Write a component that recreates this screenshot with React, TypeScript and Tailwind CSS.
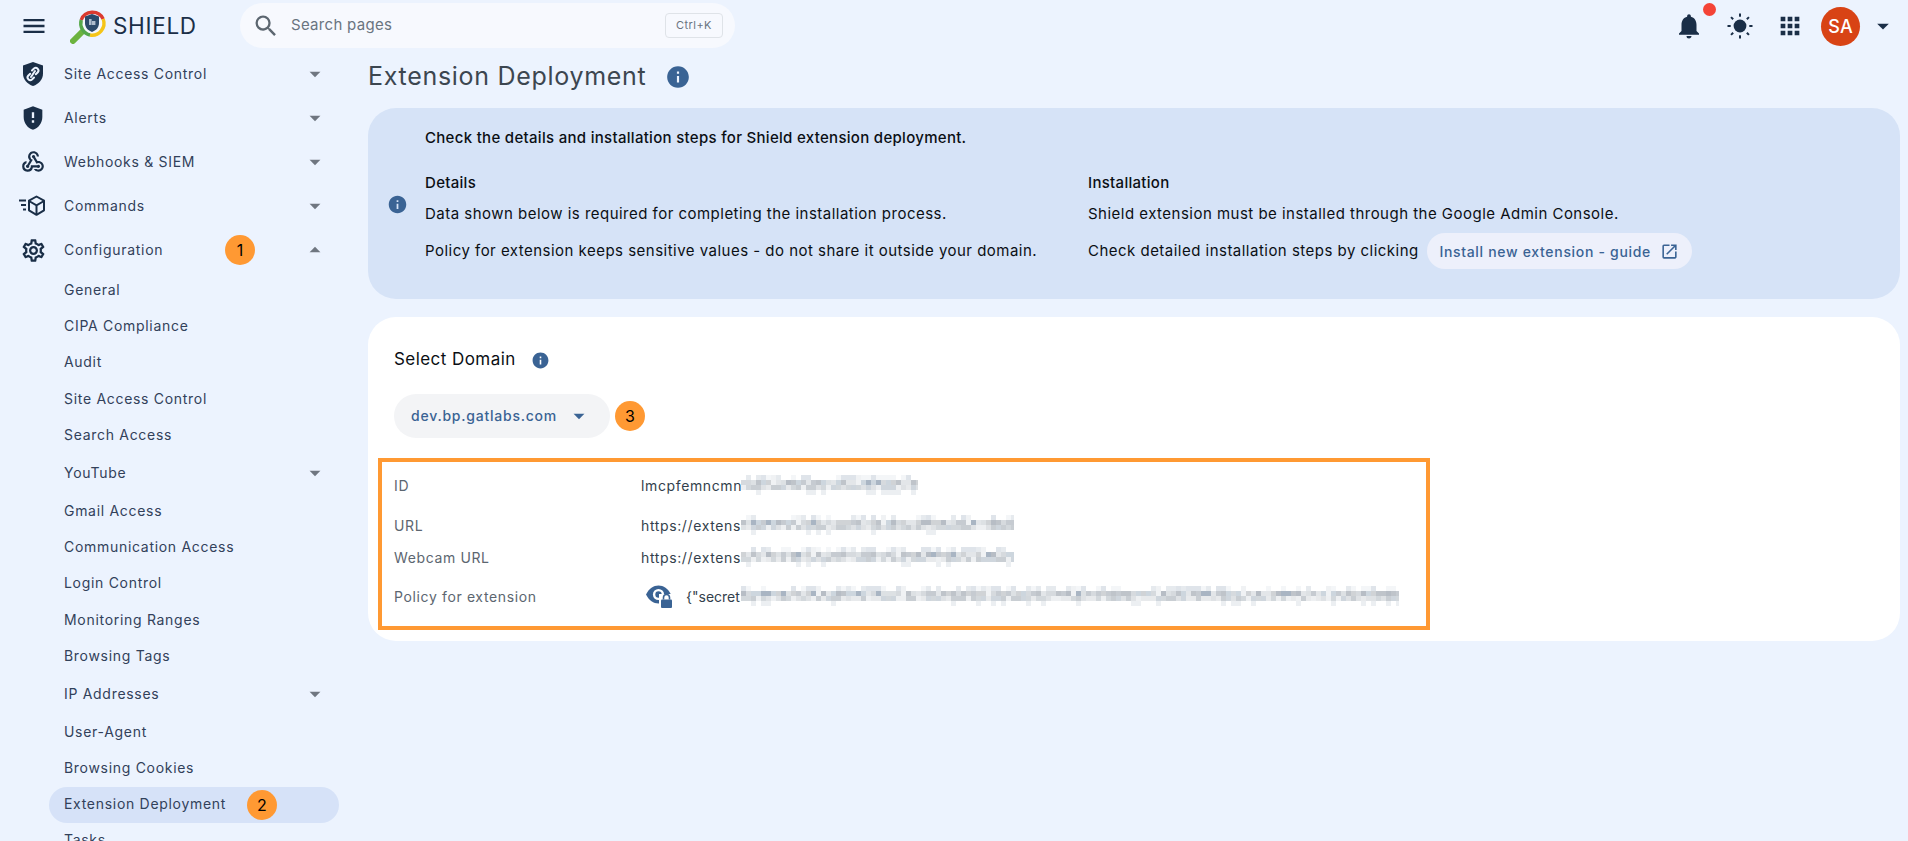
import React from "react";
import { MdMenu, MdSearch, MdNotifications, MdApps, MdOpenInNew, MdInfo, MdGppMaybe, MdWebhook, MdOutlineSettings, MdArrowDropDown, MdArrowDropUp } from "react-icons/md";

function Logo() {
  return (
    <svg width="38" height="36" viewBox="0 0 38 36" className="shrink-0">
      <path d="M3 33 L12 24" stroke="#6cb33f" strokeWidth="6" strokeLinecap="round" fill="none" />
      <circle cx="22" cy="15" r="12.5" fill="#f4f7fc" />
      <path d="M11.2 12 A12 12 0 0 1 33.2 11" stroke="#db3a2f" strokeWidth="3.4" fill="none" />
      <path d="M33.2 11 A12 12 0 0 1 20 27" stroke="#f5c518" strokeWidth="3.4" fill="none" />
      <path d="M20 27 A12 12 0 0 1 11.2 12" stroke="#55a84a" strokeWidth="3.4" fill="none" />
      <path d="M22 6 L29 8.5 V15 C29 19.5 26 22.5 22 24 C18 22.5 15 19.5 15 15 V8.5 Z" fill="#2c4a6b" />
      <rect x="19" y="11" width="2.6" height="6" fill="#aebccd" />
      <rect x="22" y="13" width="3.4" height="4" fill="#aebccd" />
    </svg>
  );
}

function ShieldLink() {
  return (
    <svg width="24" height="26" viewBox="0 0 24 26">
      <path d="M12 1 L22 4.6 V12.5 C22 18.5 17.8 23 12 25 C6.2 23 2 18.5 2 12.5 V4.6 Z" fill="#1a2e47" />
      <g stroke="#ecf3fe" strokeWidth="2" fill="none" strokeLinecap="round">
        <path d="M11 9.5 L13 7.5 A2.7 2.7 0 0 1 16.8 11.3 L14.8 13.3" />
        <path d="M13 16.5 L11 18.5 A2.7 2.7 0 0 1 7.2 14.7 L9.2 12.7" />
        <path d="M10 16 L14 10" />
      </g>
    </svg>
  );
}

function CommandsIcon() {
  return (
    <svg width="28" height="24" viewBox="0 0 28 24" fill="none" stroke="#1a2e47" strokeWidth="2">
      <path d="M17.5 2.5 L25 6.7 V16.3 L17.5 20.8 L10 16.3 V6.7 Z" strokeLinejoin="round" />
      <path d="M10 7 L17.5 11.3 L25 7 M17.5 11.3 V20.5" />
      <path d="M0 6.5 H7 M2 11 H7 M4 15.5 H7" />
    </svg>
  );
}

function SunIcon() {
  return (
    <svg width="26" height="26" viewBox="0 0 26 26" fill="#1a2e47">
      <circle cx="13" cy="13" r="6.4" />
      <rect x="12" y="0.5" width="2" height="3.2" />
      <rect x="12" y="22.3" width="2" height="3.2" />
      <rect x="0.5" y="12" width="3.2" height="2" />
      <rect x="22.3" y="12" width="3.2" height="2" />
      <rect x="3.6" y="4.2" width="3" height="2" transform="rotate(45 5.1 5.2)" />
      <rect x="19.4" y="4.2" width="3" height="2" transform="rotate(-45 20.9 5.2)" />
      <rect x="3.6" y="19.8" width="3" height="2" transform="rotate(-45 5.1 20.8)" />
      <rect x="19.4" y="19.8" width="3" height="2" transform="rotate(45 20.9 20.8)" />
    </svg>
  );
}

function EyeLock() {
  return (
    <svg width="28" height="24" viewBox="0 0 28 24">
      <path d="M1 10.5 C4 4.5 8.5 1.5 13.5 1.5 C18.5 1.5 23 4.5 26 10.5 C23 16.5 18.5 19.5 13.5 19.5 C8.5 19.5 4 16.5 1 10.5 Z" fill="#3a6394" />
      <circle cx="13.5" cy="10.5" r="5.6" fill="#fff" />
      <circle cx="13.5" cy="10.5" r="3.2" fill="#3a6394" />
      <rect x="14" y="10" width="14" height="14" fill="#fff" />
      <rect x="16" y="15.5" width="11" height="8.5" rx="1" fill="#3a6394" />
      <path d="M18.5 15.5 V13.5 A3 3 0 0 1 24.5 13.5 V15.5" stroke="#3a6394" strokeWidth="1.6" fill="none" />
    </svg>
  );
}

function Mosaic({ width, seed }: { width: number; seed: number }) {
  const rects: React.ReactElement[] = [];
  const light = ["#ffffff", "#ffffff", "#f4f6f8", "#e6eaee", "#dfe4ea", "#ffffff"];
  const mid = ["#c6cbd1", "#d6dade", "#b7bdc5", "#e3e6e9", "#a9b5c3", "#cdd6de", "#bfc4ca", "#d0d3d6", "#dde1e4"];
  const low = ["#dfe2e5", "#d3d8dc", "#e8eaec", "#cfd6dd", "#eef0f2", "#c9ced3"];
  const rare = ["#ffffff", "#ffffff", "#ffffff", "#ffffff", "#eceff2", "#ffffff"];
  const rows = [light, mid, low, rare];
  let s = seed * 7919 + 17;
  for (let y = 0; y < 4; y++) {
    for (let x = 0; x * 5 < width; x++) {
      s = (s * 1103515245 + 12345) & 0x7fffffff;
      const p = rows[y];
      const wordGap = (x + seed) % 17 === 0 && y < 2;
      const fill = wordGap ? "#f0f2f4" : p[(s >> 16) % p.length];
      rects.push(<rect key={`${x}-${y}`} x={x * 5} y={y * 5} width="5" height="5" fill={fill} />);
    }
  }
  return (
    <svg width={width} height="20" className="shrink-0" shapeRendering="crispEdges">
      {rects}
    </svg>
  );
}

function Badge({ n }: { n: number }) {
  return (
    <span className="flex h-[30px] w-[30px] shrink-0 items-center justify-center rounded-full bg-[#ff9933] text-[16px] tracking-normal text-black">{n}</span>
  );
}

function Caret({ up = false }: { up?: boolean }) {
  const Icon = up ? MdArrowDropUp : MdArrowDropDown;
  return <Icon size={26} className="text-[#6f7680]" />;
}

function TopItem({ icon, label, up, badge }: { icon: React.ReactNode; label: string; up?: boolean; badge?: number }) {
  return (
    <div className="flex h-[44px] items-center">
      <div className="flex w-[64px] justify-center pl-[2px]">
        <div className="flex h-[28px] w-[30px] items-center justify-center">{icon}</div>
      </div>
      <span className="w-[161px] pb-[2px]">{label}</span>
      <span className="w-[77px]">{badge ? <Badge n={badge} /> : null}</span>
      <Caret up={up} />
    </div>
  );
}

function SubItem({ label, caret }: { label: string; caret?: boolean }) {
  return (
    <div className={`flex items-center pl-[64px] ${caret ? "h-[39px]" : "h-[36.4px]"}`}>
      <span className="w-[238px] pb-[2px]">{label}</span>
      {caret ? <Caret /> : null}
    </div>
  );
}

function DataRow({ label, value, blur, seed, className }: { label: string; value: React.ReactNode; blur: number; seed: number; className: string }) {
  return (
    <div className={`flex h-[20px] items-center text-[14px] tracking-[0.045em] ${className}`}>
      <span className="w-[247px] text-[#5c6670]">{label}</span>
      <div className="flex w-[100px] items-center overflow-hidden whitespace-nowrap text-[#333f4c]">{value}</div>
      <Mosaic width={blur} seed={seed} />
    </div>
  );
}

export default function App() {
  return (
    <div className="h-[841px] w-[1908px] overflow-hidden bg-[#ecf3fe] font-['Inter',sans-serif] text-[14px]">
      <header className="flex h-[52px] items-center">
        <div className="flex w-[68px] justify-center">
          <MdMenu size={28} className="text-[#1a2e47]" />
        </div>
        <span className="ml-[2px]"><Logo /></span>
        <span className="ml-[5px] w-[127px] text-[22.5px] tracking-[0.03em] text-[#1a2e47]">SHIELD</span>
        <div className="-mt-[1px] flex h-[45px] w-[495px] items-center rounded-full bg-[#f7f9fe] pl-[12px] pr-[12px]">
          <MdSearch size={28} className="text-[#5c6670]" />
          <span className="ml-[11px] flex-1 pb-[1px] text-[15px] tracking-[0.02em] text-[#6a7480]">Search pages</span>
          <span className="flex h-[25px] w-[58px] items-center justify-center rounded-[4px] border border-[#dfe3e8] text-[11px] tracking-[0.04em] text-[#6a7480]">Ctrl+K</span>
        </div>
        <div className="ml-auto flex items-center">
          <div className="relative mr-[23px] flex w-[30px] justify-center">
            <MdNotifications size={30} className="text-[#1a2e47]" />
            <span className="absolute right-[-12px] top-[-8px] h-[13px] w-[13px] rounded-full bg-[#f44336]" />
          </div>
          <SunIcon />
          <div className="ml-[23px] mr-[17px] flex w-[28px] justify-center">
            <MdApps size={30} className="text-[#1a2e47]" />
          </div>
          <div className="flex h-[39px] w-[39px] items-center justify-center rounded-full bg-[#d84315] text-[18px] font-medium text-white">SA</div>
          <div className="ml-[9px] mr-[11px] flex w-[28px] justify-center">
            <MdArrowDropDown size={28} className="text-[#1a2e47]" />
          </div>
        </div>
      </header>
      <div className="flex">
        <aside className="h-[789px] w-[368px] shrink-0 overflow-hidden tracking-[0.05em] text-[#32415a]">
          <TopItem icon={<ShieldLink />} label="Site Access Control" />
          <TopItem icon={<MdGppMaybe size={28} className="text-[#1a2e47]" />} label="Alerts" />
          <TopItem icon={<MdWebhook size={26} className="text-[#1a2e47]" />} label="Webhooks & SIEM" />
          <TopItem icon={<CommandsIcon />} label="Commands" />
          <TopItem icon={<MdOutlineSettings size={27} className="text-[#1a2e47]" />} label="Configuration" up badge={1} />
          <SubItem label="General" />
          <SubItem label="CIPA Compliance" />
          <SubItem label="Audit" />
          <SubItem label="Site Access Control" />
          <SubItem label="Search Access" />
          <SubItem label="YouTube" caret />
          <SubItem label="Gmail Access" />
          <SubItem label="Communication Access" />
          <SubItem label="Login Control" />
          <SubItem label="Monitoring Ranges" />
          <SubItem label="Browsing Tags" />
          <SubItem label="IP Addresses" caret />
          <SubItem label="User-Agent" />
          <SubItem label="Browsing Cookies" />
          <div className="ml-[49px] flex h-[36px] w-[290px] items-center rounded-full bg-[#d6e2f8] pl-[15px]">
            <span className="w-[183px] pb-[2px]">Extension Deployment</span>
            <Badge n={2} />
          </div>
          <SubItem label="Tasks" />
        </aside>
        <main className="w-[1532px] shrink-0">
          <div className="flex h-[48px] items-center pt-[1px]">
            <h1 className="text-[25px] tracking-[0.028em] text-[#3c4650]">Extension Deployment</h1>
            <MdInfo size={26} className="ml-[19px] text-[#3a6394]" />
          </div>
          <section className="mt-[8px] flex h-[191px] rounded-[28px] bg-[#d6e3f7] text-[15px] tracking-[0.032em] text-[#0b0f14]">
            <div className="flex w-[57px] items-center justify-center pl-[1px] pt-[1px]">
              <MdInfo size={21} className="text-[#3a6394]" />
            </div>
            <div className="pt-[20px]">
              <p className="h-[20px] font-medium leading-[20px] tracking-[0.02em]">Check the details and installation steps for Shield extension deployment.</p>
              <div className="mt-[25px] flex">
                <div className="w-[663px]">
                  <p className="h-[20px] font-medium leading-[20px] tracking-[0.02em]">Details</p>
                  <p className="mt-[11px] h-[20px] leading-[20px]">Data shown below is required for completing the installation process.</p>
                  <p className="mt-[17px] h-[20px] leading-[20px]">Policy for extension keeps sensitive values - do not share it outside your domain.</p>
                </div>
                <div>
                  <p className="h-[20px] font-medium leading-[20px] tracking-[0.02em]">Installation</p>
                  <p className="mt-[11px] h-[20px] leading-[20px]">Shield extension must be installed through the Google Admin Console.</p>
                  <div className="mt-[9px] flex items-center">
                    <span>Check detailed installation steps by clicking</span>
                    <span className="ml-[8px] flex h-[36px] w-[265px] items-center justify-center gap-[9px] rounded-full bg-[#edf0fb] text-[14px] font-medium tracking-[0.049em] text-[#3a6394]">
                      Install new extension - guide
                      <MdOpenInNew size={19} />
                    </span>
                  </div>
                </div>
              </div>
            </div>
          </section>
          <section className="mt-[18px] h-[324px] rounded-[28px] bg-white pl-[10px] pt-[31px]">
            <div className="ml-[16px] flex h-[24px] items-center text-[17px] tracking-[0.026em] text-[#0b0f14]">
              Select Domain
              <MdInfo size={19} className="ml-[15px] text-[#3a6394]" />
            </div>
            <div className="ml-[16px] mt-[22px] flex items-center">
              <div className="flex h-[44px] w-[216px] items-center rounded-full bg-[#f3f4f6] pl-[17px] font-medium tracking-[0.055em] text-[#3a6394]">
                <span className="w-[155px] pb-[1px]">dev.bp.gatlabs.com</span>
                <MdArrowDropDown size={26} />
              </div>
              <span className="ml-[5px]"><Badge n={3} /></span>
            </div>
            <div className="mt-[20px] h-[172px] w-[1052px] border-4 border-[#ff9933] pl-[12px] pt-[13px]">
              <DataRow label="ID" value="lmcpfemncmn" blur={177} seed={11} className="" />
              <DataRow label="URL" value="https://extens" blur={273} seed={23} className="mt-[20px]" />
              <DataRow label="Webcam URL" value="https://extens" blur={273} seed={37} className="mt-[12px]" />
              <DataRow
                label="Policy for extension"
                value={
                  <>
                    <span className="ml-[4px] mr-[13px] flex shrink-0"><EyeLock /></span>
                    <span className="tracking-normal">{'{"secret'}</span>
                  </>
                }
                blur={658}
                seed={53}
                className="mt-[19px]"
              />
            </div>
          </section>
        </main>
      </div>
    </div>
  );
}
